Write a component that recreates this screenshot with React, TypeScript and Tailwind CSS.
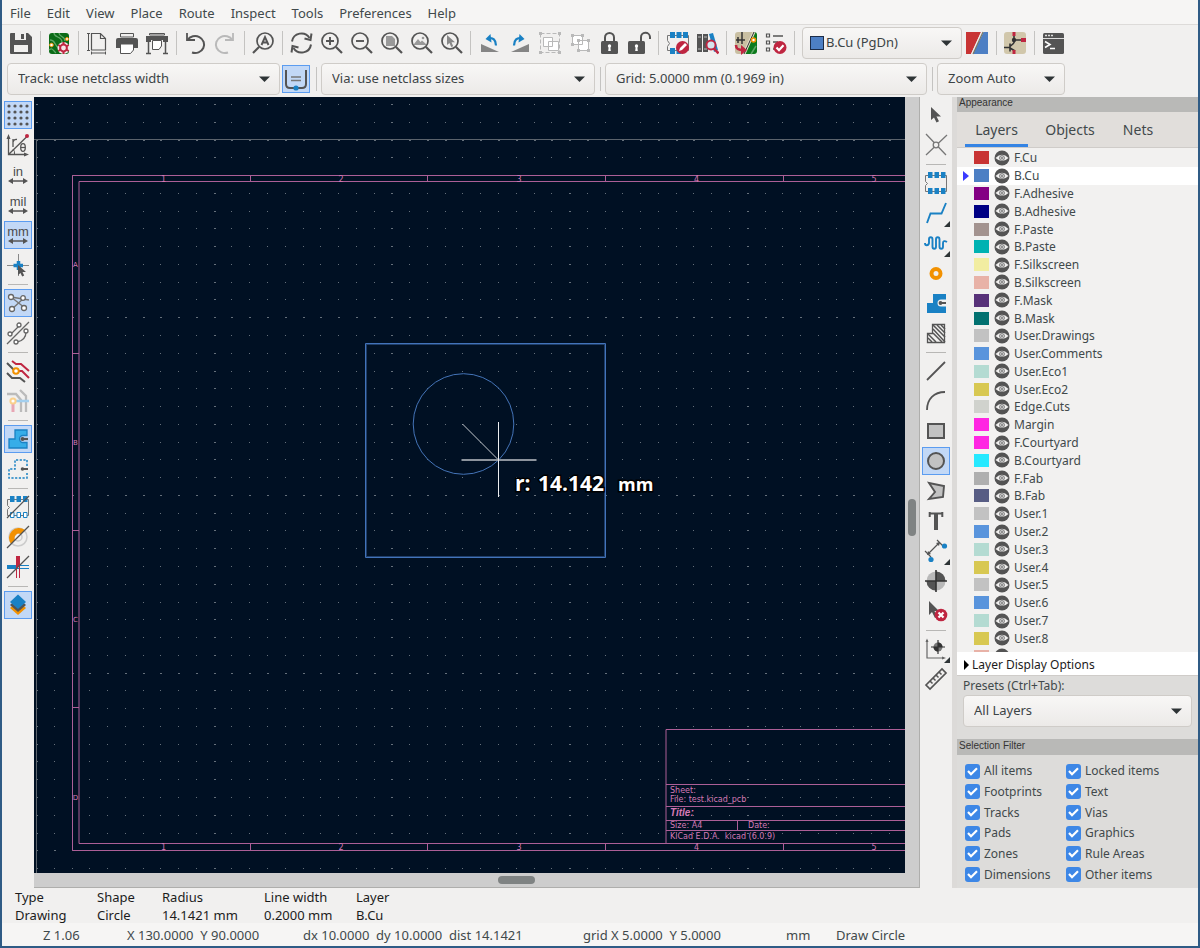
import React from "react";

const DARK = "#545454";
const BLUE = "#1a81c4";
const RED = "#bf2641";
const ORANGE = "#f29100";
const GREY = "#b9b9b9";

type Kids = { children: React.ReactNode };

function Ico({ children }: Kids) {
  return (
    <svg width="24" height="24" viewBox="0 0 24 24" fill="none" aria-hidden="true" className="block shrink-0">
      {children}
    </svg>
  );
}

function Magnifier({ children }: { children?: React.ReactNode }) {
  return (
    <Ico>
      <circle cx="11" cy="10" r="8" stroke={DARK} strokeWidth="1.7" />
      <path d="M17 16l6 6" stroke={DARK} strokeWidth="2.2" />
      {children}
    </Ico>
  );
}

const icons = {
  save: (
    <Ico>
      <path d="M1 3a1 1 0 0 1 1-1h17l4 4v16a1 1 0 0 1-1 1H2a1 1 0 0 1-1-1z" fill={DARK} />
      <path d="M6 2h11v7H6z" fill="#f1f0ef" />
      <path d="M12 3h3v5h-3z" fill={DARK} />
      <path d="M5 14h14v7H5z" fill="#f1f0ef" />
    </Ico>
  ),
  board: (
    <Ico>
      <rect x="2" y="2" width="20" height="21" rx="3" fill="#0b6b17" />
      <path d="M7 2c0 5 8 3 8 9M3 9c6 0 4 6 9 8M12 2c0 4 6 3 6 8M2 19c4-3 4 1 7 3" stroke="#5fa766" strokeWidth="1.3" />
      <circle cx="4.500" cy="14" r="1.800" fill="#fff" stroke={ORANGE} />
      <circle cx="20" cy="8" r="1.500" fill="#fff" stroke={ORANGE} />
      <circle cx="16.500" cy="17" r="6" fill="#f3e6e8" />
      <circle cx="16.500" cy="17" r="3.400" stroke={RED} strokeWidth="2" />
      <path
        d="M16.500 11v3M16.500 20v3M11.300 14l2.600 1.500M19.100 18.500l2.600 1.500M21.700 14l-2.600 1.500M13.900 18.500L11.300 20"
        stroke={RED}
        strokeWidth="2"
      />
    </Ico>
  ),
  page: (
    <Ico>
      <path d="M6.500 2.500h9l5 5v11.500h-14zM15.500 2.500v5h5" stroke={DARK} strokeWidth="1.200" />
      <path d="M3.500 3v16M2 2.500h3M2 19.500h3M6.500 22h14M6.500 20.500v3M20.500 20.500v3" stroke={DARK} />
    </Ico>
  ),
  print: (
    <Ico>
      <path d="M5.500 2.500h13V6h-13z" stroke={DARK} />
      <path d="M1 9a2 2 0 0 1 2-2h18a2 2 0 0 1 2 2v8h-4v-4H5v4H1z" fill={DARK} />
      <path d="M5.500 13h13v6l-3 3.500h-10z" fill="#fff" stroke={DARK} />
    </Ico>
  ),
  plot: (
    <Ico>
      <path d="M4.500 2.500h15V4h-15z" stroke={DARK} />
      <path d="M1 5h22v6h-5V9H6v2H1z" fill={DARK} />
      <path d="M7.500 9.500h9V15L14 18.500H7.500z" fill="#fff" stroke={DARK} />
      <path d="M3.500 11v11M20.500 11v11M1 22.500h5M18 22.500h5" stroke={DARK} strokeWidth="1.500" />
    </Ico>
  ),
  undo: (
    <Ico>
      <path d="M4 2v7h8" stroke={DARK} strokeWidth="1.800" />
      <path d="M4.500 9A9 8.500 0 1 1 9 21.500" stroke={DARK} strokeWidth="2" />
    </Ico>
  ),
  redo: (
    <Ico>
      <path d="M20 2v7h-8" stroke={GREY} strokeWidth="1.800" />
      <path d="M19.500 9A9 8.500 0 1 0 15 21.500" stroke={GREY} strokeWidth="2" />
    </Ico>
  ),
  find: (
    <Ico>
      <circle cx="14" cy="10" r="8" stroke={DARK} strokeWidth="1.700" />
      <path d="M8 16l-6 6" stroke={DARK} strokeWidth="2.200" />
      <path d="M10.500 14L14 6l3.500 8M11.500 11.500h5" stroke={DARK} strokeWidth="1.900" />
    </Ico>
  ),
  refresh: (
    <Ico>
      <path d="M3 10.500A9.500 9.500 0 0 1 20.500 7M22 13.500A9.500 9.500 0 0 1 4.500 17" stroke={DARK} strokeWidth="2" />
      <path d="M22.500 2.500L21.500 9l-6-1.500M2.500 21.500L3.500 15l6 1.500" stroke={DARK} strokeWidth="2" />
    </Ico>
  ),
  zoomIn: (
    <Magnifier>
      <path d="M11 6v8M7 10h8" stroke={DARK} strokeWidth="1.900" />
    </Magnifier>
  ),
  zoomOut: (
    <Magnifier>
      <path d="M7 10h8" stroke={DARK} strokeWidth="1.900" />
    </Magnifier>
  ),
  zoomPage: (
    <Magnifier>
      <path d="M7 5h6l3 3v7H7z" fill="#999" />
    </Magnifier>
  ),
  zoomObjects: (
    <Magnifier>
      <path d="M5 13l4-5 2.500 3 1.500-1.500 4 3.500v1H5z" fill="#999" />
      <circle cx="14" cy="7" r="1.300" fill="#999" />
    </Magnifier>
  ),
  zoomSelection: (
    <Magnifier>
      <path d="M8 4v10l2.500-2 1.700 4 2-.8-1.700-4H16z" fill="#888" />
    </Magnifier>
  ),
  rotateCcw: (
    <Ico>
      <path d="M4 13l18 8H4z" fill="#858585" />
      <path d="M11 7.500c5-1.500 8 1.500 8 7" stroke={BLUE} strokeWidth="2.200" />
      <path d="M13.500 3L8.500 8l6 3.500z" fill={BLUE} />
    </Ico>
  ),
  rotateCw: (
    <Ico>
      <path d="M22 13L4 21h18z" fill="#858585" />
      <path d="M15 7.500c-5-1.500-8 1.500-8 7" stroke={BLUE} strokeWidth="2.200" />
      <path d="M12.500 3l5 5-6 3.500z" fill={BLUE} />
    </Ico>
  ),
  group: (
    <Ico>
      <path d="M3.500 2.500h19v19h-19z" stroke={GREY} strokeDasharray="4 2" />
      <path d="M2 1h3v3H2zM21 1h3v3h-3zM2 20h3v3H2zM21 20h3v3h-3z" fill={GREY} />
      <path d="M6.500 6.500h9v9h-9zM11.500 10.500h10v9h-10z" fill="#fff" stroke={GREY} />
    </Ico>
  ),
  ungroup: (
    <Ico>
      <path d="M5.500 4.500h10v9h-10zM11.500 9.500h10v10h-10z" fill="#fff" stroke={GREY} />
      <path d="M4 3h3v3H4zM14 3h3v3h-3zM4 12h3v3H4zM20 8h3v3h-3zM10 18h3v3h-3zM20 18h3v3h-3zM10 8h3v3h-3z" fill={GREY} />
    </Ico>
  ),
  lock: (
    <Ico>
      <path d="M8 11V6.500a4.500 4.500 0 0 1 9 0V11" stroke={DARK} strokeWidth="2" />
      <rect x="4" y="10" width="17" height="13" rx="1.500" fill={DARK} />
      <circle cx="12.500" cy="15" r="1.700" fill="#fff" />
      <path d="M11.700 16h1.600l.5 4h-2.600z" fill="#fff" />
    </Ico>
  ),
  unlock: (
    <Ico>
      <path d="M14 11V6.500a4.500 4.500 0 0 1 9-.5v2" stroke={DARK} strokeWidth="2" />
      <rect x="1" y="10" width="17" height="13" rx="1.500" fill={DARK} />
      <circle cx="9.500" cy="15" r="1.700" fill="#fff" />
      <path d="M8.700 16h1.600l.5 4H8.200z" fill="#fff" />
    </Ico>
  ),
  footprintEditor: (
    <Ico>
      <path d="M2.500 4.500h21v15h-21v-4l2-3-2-3z" stroke="#777" />
      <path d="M5 1h5v6H5zM11.500 1h5v6h-5zM18 1h5v6h-5zM5 17h5v6H5zM11.500 17h5v6h-5z" fill={BLUE} />
      <circle cx="17.500" cy="16.500" r="6.500" fill={RED} />
      <path d="M14 20l1-3 5-5 2 2-5 5z" fill="#fff" />
    </Ico>
  ),
  libraries: (
    <Ico>
      <path d="M2 3h5v18H2zM8 3h5v18H8z" fill={DARK} />
      <path d="M3 6h3M9 6h3M3 18h3M9 18h3" stroke="#bbb" />
      <path d="M14 3l4-1 5 17-4 2z" fill={BLUE} />
      <circle cx="16" cy="14" r="4.500" fill="#d5e4ee" stroke={RED} strokeWidth="1.900" />
      <path d="M19 17.500l4.500 5" stroke={RED} strokeWidth="2.600" />
    </Ico>
  ),
  updatePcb: (
    <Ico>
      <rect x="2" y="1" width="21" height="22" rx="3" fill="#c9bfa2" />
      <path d="M21 1q3 0 3 3v16q0 3-3 3H12z" fill="#0c7a1c" />
      <path d="M21 1L11 23" stroke="#e6dfca" strokeWidth="3" />
      <path d="M21 1L11 23" stroke="#333" />
      <path d="M3 9h9M9 1v12M5 6v6" stroke="#333" strokeWidth="1.500" />
      <circle cx="20.500" cy="9" r="2" fill="#fff" stroke={ORANGE} strokeWidth="1.600" />
      <path d="M18 23l5-8" stroke="#5fa766" strokeWidth="1.500" />
      <path d="M3 14c0 4 2 5 8 5" stroke={RED} strokeWidth="2.600" />
      <path d="M8 14l6 5-6 5z" fill={RED} />
    </Ico>
  ),
  drc: (
    <Ico>
      <path d="M3.500 3h3v3h-3zM3.500 10h3v3h-3zM3.500 17h3v3h-3z" stroke={DARK} strokeWidth="1.200" />
      <path d="M10 5h10M10 11h5M10 18h3" stroke={DARK} strokeWidth="1.300" />
      <circle cx="17" cy="16.500" r="6.500" fill={RED} />
      <path d="M13.500 16.500l2.500 2.700 4.500-5" stroke="#fff" strokeWidth="2.200" />
    </Ico>
  ),
  layerPair: (
    <Ico>
      <path d="M1 1h15L6 23H1z" fill="#c83434" />
      <path d="M18.500 1H23v22H8z" fill="#4d7fc4" />
      <path d="M16.700 1L6.700 23" stroke="#eee" strokeWidth="1.200" />
      <path d="M18 1L8 23" stroke="#776" strokeWidth="1.200" />
    </Ico>
  ),
  schematic: (
    <Ico>
      <rect x="1" y="1" width="22" height="22" rx="3" fill="#d1c7ab" />
      <path d="M11 4v8M11 9h8M11 12l-4 3.500M1 16.500h6M7 12.500v8M7 17l5 3" stroke="#333" strokeWidth="1.600" />
      <circle cx="11" cy="9" r="2.200" fill="#333" />
      <path d="M9.500 1h3v4h-3zM18 7h5v4h-5zM9.500 19h3v4h-3z" fill={RED} />
    </Ico>
  ),
  console: (
    <Ico>
      <rect x="2" y="2" width="21" height="21" rx="1.500" fill={DARK} />
      <path d="M2 7.500h21" stroke="#ddd" />
      <path d="M4 4.500h2M7 4.500h2M10 4.500h2" stroke="#ddd" strokeWidth="1.500" />
      <path d="M4 10.500l5 3-5 3M9 17.500h5" stroke="#fff" strokeWidth="1.600" />
    </Ico>
  ),
  trackWidth: (
    <Ico>
      <path d="M2 3v14q0 4 4 4h12q4 0 4-4V3" stroke={DARK} strokeWidth="2" />
      <path d="M7 10h10M7 13.500h10" stroke="#777" strokeWidth="1.300" />
      <circle cx="12" cy="21" r="2.600" fill={BLUE} />
    </Ico>
  ),
  grid: (
    <Ico>
      {[3, 9, 15, 21].map((y) =>
        [3, 9, 15, 21].map((x) => <circle key={`${x}-${y}`} cx={x} cy={y} r="1.600" fill={DARK} />)
      )}
    </Ico>
  ),
  polar: (
    <Ico>
      <path d="M2.500 4v17.500H20M2.500 21.500L21 3.500" stroke={DARK} strokeWidth="1.300" />
      <path d="M.5 6l2-5 2 5zM18 19.500l5 2-5 2z" fill={DARK} />
      <path d="M7 16q2 2 1.500 5.500" stroke={DARK} />
      <path d="M7 14V6M7 9q1-3 4-2.500" stroke={DARK} strokeWidth="1.300" />
      <ellipse cx="17" cy="14.500" rx="2.300" ry="3.800" stroke={DARK} strokeWidth="1.300" />
      <path d="M15 14.500h4" stroke={DARK} strokeWidth="1.200" />
      <circle cx="21" cy="3" r="2" fill={RED} />
    </Ico>
  ),
  cursor: (
    <Ico>
      <path d="M12.500 1v22M1 12.500h22" stroke="#888" />
      <path d="M12.500 8v9M7.500 12.500h9.500" stroke={BLUE} strokeWidth="3.500" />
      <path d="M12 12v10l2.500-2 1.700 3.500 2-1-1.700-3.500H20z" fill={DARK} />
    </Ico>
  ),
  ratsnest: (
    <Ico>
      <path d="M5 6l14 11M6 18L18 7M5 6l18 3" stroke="#777" strokeWidth="1.400" />
      <g fill="#fff" stroke="#666" strokeWidth="1.300">
        <circle cx="5" cy="6" r="2.500" />
        <circle cx="17" cy="7" r="2.300" />
        <circle cx="6" cy="18" r="2.500" />
        <circle cx="18" cy="17" r="2.500" />
      </g>
    </Ico>
  ),
  curvedRats: (
    <Ico>
      <path d="M4 14l9-9M20 11c0 6-4 9-9 10M1 23L23 1" stroke="#666" strokeWidth="1.300" />
      <g fill="#fff" stroke="#666" strokeWidth="1.300">
        <circle cx="4" cy="13" r="2" />
        <circle cx="13" cy="4" r="2" />
        <circle cx="20" cy="10" r="2" />
        <circle cx="10" cy="21" r="2" />
      </g>
    </Ico>
  ),
  ghostNets: (
    <Ico>
      <path d="M6 2l4 3h5l8 7M12 12h4l7 7" stroke={RED} strokeWidth="2" />
      <path d="M1 4l8 8M1 14l5 5h8l5 4" stroke={DARK} strokeWidth="2" />
      <circle cx="10" cy="12" r="2.800" fill="#fff" stroke={ORANGE} strokeWidth="2" />
    </Ico>
  ),
  highlightNet: (
    <Ico>
      <path d="M1 5h9l5 6v12M14 1l6 6v16" stroke="#bbb" strokeWidth="2.300" />
      <path d="M9 12h14" stroke="#a3cfee" strokeWidth="2.500" />
      <path d="M7 14v9" stroke="#e8a6b4" strokeWidth="3" />
      <circle cx="7" cy="12" r="2.600" fill="#fff" stroke="#fad08c" strokeWidth="2" />
    </Ico>
  ),
  zoneFill: (
    <Ico>
      <path d="M9 3h12v5.500h-4a3.500 3.500 0 0 0 0 7h4V21H3V12h6z" fill="#36ade8" stroke={BLUE} strokeWidth="1.300" />
      <path d="M17 12h5" stroke={DARK} strokeWidth="2.200" />
      <circle cx="16.500" cy="12" r="2" fill={DARK} />
    </Ico>
  ),
  zoneOutline: (
    <Ico>
      <path d="M21 9V3H9v9H3v9h18v-6" stroke={BLUE} strokeWidth="1.500" strokeDasharray="2.200 1.500" />
      <path d="M17 12h5" stroke={DARK} strokeWidth="2" />
      <circle cx="16.500" cy="12" r="1.800" fill={DARK} />
    </Ico>
  ),
  padSketch: (
    <Ico>
      <path d="M1.500 4.500h21v16h-21v-6l2-2-2-2z" stroke="#777" />
      <path d="M4 1h4.500v6H4zM10.500 1H15v6h-4.500zM17 1h4.500v6H17z" fill={BLUE} />
      <path d="M4.500 17.500h3.500v5H4.500zM11 17.500h3.500v5H11zM17.500 17.500H21v5h-3.500z" fill="#fff" stroke={BLUE} />
      <path d="M1 23L23 1" stroke={DARK} strokeWidth="1.200" />
    </Ico>
  ),
  viaSketch: (
    <Ico>
      <circle cx="12" cy="12" r="9" stroke="#ccc" strokeWidth="1.500" />
      <circle cx="12" cy="12" r="4" stroke="#ccc" strokeWidth="1.500" />
      <path d="M5 19A10 10 0 0 1 19 5L15 9a4.500 4.500 0 0 0-6 6z" fill={ORANGE} />
      <path d="M1 23L23 1" stroke={DARK} strokeWidth="1.200" />
    </Ico>
  ),
  trackSketch: (
    <Ico>
      <path d="M1 12h11" stroke={BLUE} strokeWidth="4" />
      <path d="M12 10.500h11M12 13.500h11" stroke={BLUE} />
      <path d="M12 1v11" stroke={RED} strokeWidth="4" />
      <path d="M10.500 12v11M13.500 12v11" stroke={RED} />
      <path d="M1 23L23 1" stroke={DARK} strokeWidth="1.200" />
    </Ico>
  ),
  layers: (
    <Ico>
      <path d="M12 8l8 7-8 7-8-7z" fill={ORANGE} />
      <path d="M12 5l8 7-8 7-8-7z" fill={DARK} />
      <path d="M12 1.500l8 7.500-8 7-8-7z" fill={BLUE} />
    </Ico>
  ),
  select: (
    <Ico>
      <path d="M7 4v13l3-2.500 2.500 5 2.500-1.200L12.500 13.500H17z" fill={DARK} />
    </Ico>
  ),
  localRats: (
    <Ico>
      <path d="M2 1l20 21M23 2L2 22" stroke="#777" strokeWidth="1.300" />
      <circle cx="12" cy="12" r="2.800" fill="#f1f0ef" stroke="#777" strokeWidth="1.300" />
    </Ico>
  ),
  footprint: (
    <Ico>
      <path d="M1.500 4.500h21v16h-21v-6l2-2-2-2z" stroke="#777" />
      <path d="M4 1h4.500v6H4zM10.500 1H15v6h-4.500zM17 1h4.500v6H17zM4 17h4.500v6H4zM10.500 17H15v6h-4.500zM17 17h4.500v6H17z" fill={BLUE} />
    </Ico>
  ),
  track: (
    <Ico>
      <path d="M3 22l3.500-9.500h11L22 2" stroke={BLUE} strokeWidth="1.900" />
    </Ico>
  ),
  tune: (
    <Ico>
      <path
        d="M1 12c0 3 3.500 3 4 0V8.500c0-3 3.500-3 3.500 0v7c0 3 3.500 3 3.500 0v-7c0-3 3.500-3 3.500 0v7c0 3 3.500 3 3.500 0V12c0-2 1.500-2.500 4-1"
        stroke={BLUE}
        strokeWidth="1.900"
      />
    </Ico>
  ),
  via: (
    <Ico>
      <circle cx="12" cy="12.500" r="4.500" stroke={ORANGE} strokeWidth="4" />
    </Ico>
  ),
  zone: (
    <Ico>
      <path d="M9 3h13v5.500h-5a3.500 3.500 0 0 0 0 7h5V22H3V12h6z" fill={BLUE} />
      <path d="M17 12h5" stroke={DARK} strokeWidth="2" />
      <circle cx="16.500" cy="12" r="1.900" fill={DARK} />
    </Ico>
  ),
  ruleArea: (
    <Ico>
      <path d="M8.500 3.500h12v18h-17v-9h5z" stroke={DARK} strokeWidth="1.300" />
      <path d="M9 4l12 12M9 8l12 13M13 4l8 8M17 4l4 4M9 12l9 9M4 13l8 8M4 17l4 4" stroke={DARK} strokeWidth="1.500" />
    </Ico>
  ),
  line: (
    <Ico>
      <path d="M3 21L21 3" stroke={DARK} strokeWidth="1.800" />
    </Ico>
  ),
  arc: (
    <Ico>
      <path d="M3 21C3 10 10 3 21 3" stroke={DARK} strokeWidth="1.800" />
    </Ico>
  ),
  rect: (
    <Ico>
      <path d="M4 5h16v14H4z" fill="#c2c2c2" stroke={DARK} strokeWidth="2" />
    </Ico>
  ),
  circle: (
    <Ico>
      <circle cx="12" cy="12" r="8" fill="#c2c2c2" stroke={DARK} strokeWidth="2" />
    </Ico>
  ),
  polygon: (
    <Ico>
      <path d="M5 4l15 3-1 11-14 2 6-7z" fill="#c2c2c2" stroke={DARK} strokeWidth="1.900" />
    </Ico>
  ),
  text: (
    <Ico>
      <path d="M5 4.500h14M5.700 3v5M18.300 3v5" stroke={DARK} strokeWidth="2" />
      <path d="M12 4v17" stroke={DARK} strokeWidth="4" />
    </Ico>
  ),
  dimension: (
    <Ico>
      <path d="M4 15L15 4M1 12l6 6M13 1l6 6" stroke={DARK} strokeWidth="1.200" />
      <path d="M3 16l1-4 3 3zM16 3l-1 4-3-3z" fill={DARK} />
      <circle cx="20.500" cy="7" r="2.600" fill={BLUE} />
      <circle cx="7" cy="20.500" r="2.600" fill={BLUE} />
    </Ico>
  ),
  target: (
    <Ico>
      <circle cx="12" cy="12" r="9.500" fill={GREY} />
      <path d="M12 12V2.500a9.500 9.500 0 0 1 9.500 9.500zM12 12v9.500A9.500 9.500 0 0 1 2.500 12z" fill={DARK} />
      <path d="M12 1v22M1 12h22" stroke="#333" strokeWidth="1.600" />
    </Ico>
  ),
  remove: (
    <Ico>
      <path d="M5 2v14l3-3 3 6 2-1-2.500-6H15z" fill={DARK} />
      <circle cx="17" cy="16" r="6.300" fill={RED} />
      <path d="M14.500 13.500l5 5M19.500 13.500l-5 5" stroke="#fff" strokeWidth="2.200" />
    </Ico>
  ),
  origin: (
    <Ico>
      <path d="M3 3v18h17" stroke="#666" strokeWidth="1.200" />
      <path d="M1.500 5L3 1.500 4.500 5zM18 19.500l4 1.500-4 1.500z" fill="#666" />
      <circle cx="14" cy="10" r="4.500" fill="#777" />
      <path d="M14 10V5.500a4.500 4.500 0 0 1 4.500 4.500zM14 10v4.500A4.500 4.500 0 0 1 9.500 10z" fill="#333" />
      <path d="M14 3v14M7 10h14" stroke="#333" strokeWidth="1.200" />
    </Ico>
  ),
  ruler: (
    <Ico>
      <path d="M2 18L18 2l4 4L6 22z" stroke={DARK} strokeWidth="1.700" />
      <path d="M6 14l2.500 2.500M9 11l2.500 2.500M12 8l2.500 2.500M15 5l2.500 2.500" stroke={DARK} strokeWidth="1.500" />
    </Ico>
  ),
};

type IconName = keyof typeof icons;

const arrows = (
  <svg width="20" height="6" viewBox="0 0 20 6" aria-hidden="true">
    <path d="M3 3h14" stroke={DARK} strokeWidth="1.500" />
    <path d="M0 3l5-3v6zM20 3l-5-3v6z" fill={DARK} />
  </svg>
);

function ToolButton({
  label,
  icon,
  unit,
  on,
  more,
}: {
  label: string;
  icon?: IconName;
  unit?: string;
  on?: boolean;
  more?: boolean;
}) {
  return (
    <button
      type="button"
      aria-label={label}
      aria-pressed={on}
      className={
        on
          ? "relative m-px flex size-7 shrink-0 flex-col items-center justify-center border border-[#5b9cf0] bg-[#c2d8f6]"
          : "relative m-px flex size-7 shrink-0 flex-col items-center justify-center"
      }
    >
      {icon && icons[icon]}
      {unit && (
        <>
          <span className="font-['Liberation_Sans'] text-[13px] leading-3 font-normal text-[#4c4c4c]">{unit}</span>
          {arrows}
        </>
      )}
      {more && (
        <svg width="6" height="6" viewBox="0 0 6 6" className="absolute right-0 bottom-0" aria-hidden="true">
          <path d="M6 0v6H0z" fill="#2e3436" />
        </svg>
      )}
    </button>
  );
}

const VSep = () => (
  <div className="flex w-2 shrink-0 justify-center">
    <div className="h-6 w-px bg-[#c4c3c1]" />
  </div>
);
const HSep = () => (
  <div className="flex h-2 shrink-0 items-center justify-center">
    <div className="h-px w-5 bg-[#b8b7b5]" />
  </div>
);

type Tool = "-" | { label: string; icon?: IconName; unit?: string; on?: boolean; more?: boolean };

const topTools: Tool[] = [
  { label: "Save", icon: "save" },
  "-",
  { label: "Board setup", icon: "board" },
  "-",
  { label: "Page settings", icon: "page" },
  { label: "Print", icon: "print" },
  { label: "Plot", icon: "plot" },
  "-",
  { label: "Undo", icon: "undo" },
  { label: "Redo", icon: "redo" },
  "-",
  { label: "Find", icon: "find" },
  "-",
  { label: "Refresh", icon: "refresh" },
  { label: "Zoom in", icon: "zoomIn" },
  { label: "Zoom out", icon: "zoomOut" },
  { label: "Zoom to page", icon: "zoomPage" },
  { label: "Zoom to objects", icon: "zoomObjects" },
  { label: "Zoom to selection", icon: "zoomSelection" },
  "-",
  { label: "Rotate counterclockwise", icon: "rotateCcw" },
  { label: "Rotate clockwise", icon: "rotateCw" },
  { label: "Group", icon: "group" },
  { label: "Ungroup", icon: "ungroup" },
  { label: "Lock", icon: "lock" },
  { label: "Unlock", icon: "unlock" },
  "-",
  { label: "Footprint editor", icon: "footprintEditor" },
  { label: "Footprint libraries", icon: "libraries" },
  "-",
  { label: "Update board from schematic", icon: "updatePcb" },
  { label: "Design rules check", icon: "drc" },
  "-",
];

const leftTools: Tool[] = [
  { label: "Grid", icon: "grid", on: true },
  { label: "Polar coordinates", icon: "polar" },
  { label: "Inches", unit: "in" },
  { label: "Mils", unit: "mil" },
  { label: "Millimeters", unit: "mm", on: true },
  { label: "Cursor shape", icon: "cursor" },
  "-",
  { label: "Ratsnest", icon: "ratsnest", on: true },
  { label: "Curved ratsnest", icon: "curvedRats" },
  "-",
  { label: "Dim inactive layers", icon: "ghostNets" },
  { label: "Net highlighting", icon: "highlightNet" },
  "-",
  { label: "Filled zones", icon: "zoneFill", on: true },
  { label: "Zone outlines", icon: "zoneOutline" },
  "-",
  { label: "Sketch pads", icon: "padSketch" },
  { label: "Sketch vias", icon: "viaSketch" },
  { label: "Sketch tracks", icon: "trackSketch" },
  "-",
  { label: "Layers manager", icon: "layers", on: true },
];

const rightTools: Tool[] = [
  { label: "Select", icon: "select" },
  { label: "Local ratsnest", icon: "localRats" },
  "-",
  { label: "Add footprint", icon: "footprint" },
  { label: "Route track", icon: "track", more: true },
  { label: "Tune length", icon: "tune", more: true },
  { label: "Add via", icon: "via" },
  { label: "Add zone", icon: "zone" },
  { label: "Add rule area", icon: "ruleArea" },
  "-",
  { label: "Draw line", icon: "line" },
  { label: "Draw arc", icon: "arc" },
  { label: "Draw rectangle", icon: "rect" },
  { label: "Draw circle", icon: "circle", on: true },
  { label: "Draw polygon", icon: "polygon" },
  { label: "Add text", icon: "text" },
  { label: "Add dimension", icon: "dimension", more: true },
  { label: "Add target", icon: "target" },
  { label: "Delete", icon: "remove" },
  "-",
  { label: "Set origin", icon: "origin", more: true },
  { label: "Measure", icon: "ruler" },
];

function Tools({ items, vertical }: { items: Tool[]; vertical?: boolean }) {
  return (
    <>
      {items.map((t, i) => (t === "-" ? vertical ? <HSep key={i} /> : <VSep key={i} /> : <ToolButton key={i} {...t} />))}
    </>
  );
}

function Combo({ label, value, width, swatch }: { label: string; value: string; width: string; swatch?: boolean }) {
  return (
    <div className={`relative flex h-8 shrink-0 items-center ${width}`}>
      <select
        aria-label={label}
        className={`h-full w-full appearance-none rounded border border-[#cfccc8] bg-linear-to-b from-[#f8f7f6] to-[#eceae8] text-[13px] text-[#3c4446] ${swatch ? "pl-[23px]" : "pl-[10px]"}`}
      >
        <option>{value}</option>
      </select>
      {swatch && <span className="absolute left-2 size-[14px] border border-[#1c2c48] bg-[#4d7fc4]" />}
      <svg width="12" height="7" viewBox="0 0 12 7" className="pointer-events-none absolute right-[10px]" aria-hidden="true">
        <path d="M1 0.500h11L6.500 6z" fill="#2e3436" />
      </svg>
    </div>
  );
}

const layers: [string, string][] = [
  ["F.Cu", "#c83434"],
  ["B.Cu", "#4d7fc4"],
  ["F.Adhesive", "#840084"],
  ["B.Adhesive", "#000084"],
  ["F.Paste", "#a3938f"],
  ["B.Paste", "#00b2b2"],
  ["F.Silkscreen", "#f2eda1"],
  ["B.Silkscreen", "#e8b2a7"],
  ["F.Mask", "#583279"],
  ["B.Mask", "#027170"],
  ["User.Drawings", "#c2c2c2"],
  ["User.Comments", "#5994dc"],
  ["User.Eco1", "#b4dbd2"],
  ["User.Eco2", "#d8c852"],
  ["Edge.Cuts", "#d0d2cd"],
  ["Margin", "#ff26e2"],
  ["F.Courtyard", "#ff26e2"],
  ["B.Courtyard", "#26e9ff"],
  ["F.Fab", "#afafaf"],
  ["B.Fab", "#585d84"],
  ["User.1", "#c2c2c2"],
  ["User.2", "#5994dc"],
  ["User.3", "#b4dbd2"],
  ["User.4", "#d8c852"],
  ["User.5", "#c2c2c2"],
  ["User.6", "#5994dc"],
  ["User.7", "#b4dbd2"],
  ["User.8", "#d8c852"],
  ["User.9", "#e8b2a7"],
];

const Eye = () => (
  <svg width="16" height="16" viewBox="0 0 16 16" aria-hidden="true" className="block">
    <circle cx="8" cy="8" r="7.500" fill={DARK} />
    <path d="M1.500 8Q8 1.500 14.500 8 8 14 1.500 8z" fill="#f1f0ef" />
    <circle cx="8" cy="8" r="2.400" fill="#ddd" stroke="#777" strokeWidth="1" />
    <circle cx="8" cy="8" r="1" fill="#777" />
  </svg>
);

const filters = [
  "All items",
  "Locked items",
  "Footprints",
  "Text",
  "Tracks",
  "Vias",
  "Pads",
  "Graphics",
  "Zones",
  "Rule Areas",
  "Dimensions",
  "Other items",
];

const STEP = 17.77;

function gridPath(cols: number, rows: number) {
  let d = "";
  for (let j = 0; j < rows; j++) {
    for (let i = 0; i < cols; i++) {
      const w = i % 10 === 0 || j % 10 === 2 ? 2 : 1;
      d += `M${Math.round(2 + i * STEP)} ${Math.round(7 + j * STEP)}h${w}v1h-${w}z`;
    }
  }
  return d;
}

const PINK = "#d47ab6";

function Board() {
  const cols = [163.5, 341, 519, 696.5, 874];
  const rows: [string, number][] = [
    ["A", 264],
    ["B", 441.5],
    ["C", 619],
    ["D", 797],
  ];
  return (
    <svg width="100%" height="100%" className="absolute inset-0" role="img" aria-label="Board drawing">
      <path d={gridPath(120, 80)} fill="#65707b" shapeRendering="crispEdges" />
      <g transform="translate(-34 -97)">
        <path d="M34 139.500h3000M36.500 139v2000" stroke="#5b636c" />
        <g stroke="#ac5f97" fill="none">
          <path d="M3000 175.500H72.500V850.500H3000" />
          <path d="M3000 181.500H79V843.500H3000" />
          <path d="M250.500 176v6M427.500 176v6M605.500 176v6M783.500 176v6M250.500 844v6M427.500 844v6M605.500 844v6M783.500 844v6" />
          <path d="M73 353.500h6M73 530.500h6M73 707.500h6" />
          <path d="M3000 729.500H666V843M666 784.500h2400M666 806.500h2400M666 820.500h2400M666 830.500h2400M737.500 820v10" />
        </g>
        <g fill={PINK} fontFamily="'DejaVu Sans', sans-serif" fontSize="8">
          {cols.map((x, i) => (
            <g key={x} textAnchor="middle" fontSize="8">
              <text x={x} y="181.500">{i + 1}</text>
              <text x={x} y="849.500">{i + 1}</text>
            </g>
          ))}
          {rows.map(([n, y]) => (
            <text key={n} x="75.500" y={y + 3} textAnchor="middle" fontSize="7">{n}</text>
          ))}
          <text x="670" y="793">Sheet:</text>
          <text x="670" y="802">File: test.kicad_pcb</text>
          <text x="670" y="816" fontSize="10" fontWeight="bold" fontStyle="italic" fontFamily="'Liberation Sans', sans-serif">Title:</text>
          <text x="670" y="828">Size: A4</text>
          <text x="748" y="828">Date:</text>
          <text x="670" y="839" fontFamily="'DejaVu Sans', sans-serif" xmlSpace="preserve">KiCad E.D.A.  kicad (6.0.9)</text>
        </g>
        <path d="M365.500 343.500h240v214h-240z" stroke="#4273ba" fill="none" />
        <path d="M366.500 344.500h238v212h-238z" stroke="#3f6cb0" strokeDasharray="1 1" fill="none" />
        <circle cx="463.500" cy="424" r="50.300" stroke="#4474b8" fill="none" />
        <path d="M462.500 424l36 36" stroke="#c5c9cf" />
        <path d="M461.500 460h75" stroke="#8d949d" strokeWidth="2" />
        <path d="M498.500 422v75" stroke="#eceef0" />
        <text
          y="491"
          fontFamily="'Open Sans', sans-serif"
          fontWeight="700"
          fontSize="21"
          fill="#fff"
          stroke="#000"
          strokeWidth="3"
          paintOrder="stroke"
        >
          <tspan x="515">r: </tspan>
          <tspan x="538">14.142 </tspan>
          <tspan x="618" fontSize="18">mm</tspan>
        </text>
      </g>
    </svg>
  );
}

const info: [string, string, string][] = [
  ["Type", "Drawing", "w-[82px]"],
  ["Shape", "Circle", "w-[65px]"],
  ["Radius", "14.1421 mm", "w-[102px]"],
  ["Line width", "0.2000 mm", "w-[92px]"],
  ["Layer", "B.Cu", "w-[82px]"],
];

const menus = ["File", "Edit", "View", "Place", "Route", "Inspect", "Tools", "Preferences", "Help"];

export default function App() {
  return (
    <div className="flex h-screen flex-col overflow-hidden border-x-2 border-b-2 border-[#2f5b85] bg-[#f1f0ef] font-['Noto_Sans',sans-serif] text-[13px] text-[#41494b]">
      <nav className="flex h-[25px] shrink-0 items-center border-b border-[#dddbd9] bg-[#f6f5f4] pt-px">
        {menus.map((m) => (
          <button key={m} type="button" className="px-2 leading-6">
            {m}
          </button>
        ))}
      </nav>

      <div className="flex h-9 shrink-0 items-center pl-1">
        <Tools items={topTools} />
        <div className="flex items-center pl-1">
          <Combo label="Active layer" value="B.Cu (PgDn)" width="w-[160px]" swatch />
          <ToolButton label="Layer pair" icon="layerPair" />
          <VSep />
          <ToolButton label="Schematic editor" icon="schematic" />
          <VSep />
          <ToolButton label="Scripting console" icon="console" />
        </div>
      </div>

      <div className="flex h-9 shrink-0 items-center gap-px pl-[5px]">
        <Combo label="Track width" value="Track: use netclass width" width="w-[273px]" />
        <ToolButton label="Use existing track width" icon="trackWidth" on />
        <VSep />
        <Combo label="Via size" value="Via: use netclass sizes" width="w-[274px]" />
        <VSep />
        <Combo label="Grid" value="Grid: 5.0000 mm (0.1969 in)" width="w-[322px]" />
        <VSep />
        <Combo label="Zoom" value="Zoom Auto" width="w-[128px]" />
      </div>

      <div className="flex min-h-0 flex-1">
        <div className="flex w-8 shrink-0 flex-col items-center pt-[3px]">
          <Tools items={leftTools} vertical />
        </div>

        <main className="flex min-w-0 flex-1 flex-col border-r border-b border-[#aeaeac] bg-[#cdcdcd]">
          <div className="flex min-h-0 flex-1">
            <div className="relative min-w-0 flex-1 overflow-hidden bg-[#001023]">
              <Board />
            </div>
            <div className="flex w-[14px] shrink-0 flex-col items-center justify-center pt-[64px]">
              <div className="h-[37px] w-2 rounded-full bg-[#7f8383]" />
            </div>
          </div>
          <div className="flex h-[14px] shrink-0 items-center justify-center pl-[80px]">
            <div className="h-2 w-[37px] rounded-full bg-[#7f8383]" />
          </div>
        </main>

        <div className="flex w-8 shrink-0 flex-col items-center pt-[3px]">
          <Tools items={rightTools} vertical />
        </div>

        <aside className="flex w-[246px] shrink-0 flex-col border-l-[5px] border-[#dcdad8] bg-[#dddcda]">
          <h2 className="h-[15px] shrink-0 bg-[#b9b9b7] pl-[2px] font-['Liberation_Sans'] text-[10px] leading-3 text-[#333]">
            Appearance
          </h2>
          <div role="tablist" className="flex h-9 shrink-0 border-b border-[#cfccc9] bg-[#e1dedb] pl-2">
            <button type="button" role="tab" aria-selected className="w-[63px] border-b-[3px] border-[#3584e4] pt-[3px] text-[14px]">
              Layers
            </button>
            <button type="button" role="tab" className="w-[84px] text-[14px]">
              Objects
            </button>
            <button type="button" role="tab" className="w-[52px] text-[14px]">
              Nets
            </button>
          </div>
          <div className="min-h-0 flex-1 overflow-hidden bg-[#f2f1f0] pt-px">
            <ul className="grid h-[516px] auto-rows-fr">
              {layers.map(([name, color]) => (
                <li
                  key={name}
                  className={name === "B.Cu" ? "flex min-h-0 items-center bg-white" : "flex min-h-0 items-center"}
                >
                  <span className="flex w-[17px] justify-center">
                    {name === "B.Cu" && (
                      <svg width="6" height="10" viewBox="0 0 6 10" aria-hidden="true">
                        <path d="M0 0l6 5-6 5z" fill="#3b3bff" />
                      </svg>
                    )}
                  </span>
                  <span className="h-[13px] w-[15px]" style={{ backgroundColor: color }} />
                  <button type="button" aria-label={`Toggle ${name}`} className="ml-[5px]">
                    <Eye />
                  </button>
                  <span className="pt-px pl-1 text-[12px] leading-4">{name}</span>
                </li>
              ))}
            </ul>
          </div>
          <button
            type="button"
            className="flex h-6 shrink-0 items-center gap-[3px] border-b border-[#cfccc9] bg-white pt-[3px] pl-[7px] text-[12px] text-[#1c1c1c]"
          >
            <svg width="5" height="10" viewBox="0 0 5 10" aria-hidden="true">
              <path d="M0 0l5 5-5 5z" fill="#000" />
            </svg>
            Layer Display Options
          </button>
          <div className="h-[63px] shrink-0 px-[6px] pt-px">
            <p className="text-[12px] leading-[18px]">Presets (Ctrl+Tab):</p>
            <Combo label="Presets" value="All Layers" width="w-full" />
          </div>
          <h2 className="h-4 shrink-0 bg-[#b9b9b7] pl-[2px] font-['Liberation_Sans'] text-[10px] leading-[13px] text-[#333]">
            Selection Filter
          </h2>
          <div className="grid h-[133px] shrink-0 auto-rows-fr grid-cols-[101px_1fr] pt-[6px] pb-[3px] pl-2">
            {filters.map((f) => (
              <label key={f} className="flex items-center gap-1 text-[12px]">
                <span className="relative size-[15px]">
                  <input type="checkbox" defaultChecked className="block size-[15px] appearance-none rounded-[3px] bg-[#3d87e6]" />
                  <svg width="11" height="9" viewBox="0 0 11 9" fill="none" className="pointer-events-none absolute top-[3px] left-[2px]" aria-hidden="true">
                    <path d="M1 4l3 3.200L10 1.200" stroke="#fff" strokeWidth="2.200" />
                  </svg>
                </span>
                {f}
              </label>
            ))}
          </div>
        </aside>
      </div>

      <dl className="flex h-[35px] shrink-0 pl-[13px] text-[#1c1c1c]">
        {info.map(([k, v, w]) => (
          <div key={k} className={`shrink-0 leading-[18px] whitespace-nowrap ${w}`}>
            <dt>{k}</dt>
            <dd>{v}</dd>
          </div>
        ))}
      </dl>
      <footer className="flex h-[23px] shrink-0 items-center bg-[#f6f5f4] pt-[2px] pl-[41px] whitespace-nowrap">
        <span className="w-[84px]">Z 1.06</span>
        <span className="w-[176px]">X 130.0000&nbsp; Y 90.0000</span>
        <span className="w-[280px]">dx 10.0000&nbsp; dy 10.0000&nbsp; dist 14.1421</span>
        <span className="w-[203px]">grid X 5.0000&nbsp; Y 5.0000</span>
        <span className="w-[50px]">mm</span>
        <span>Draw Circle</span>
      </footer>
    </div>
  );
}
